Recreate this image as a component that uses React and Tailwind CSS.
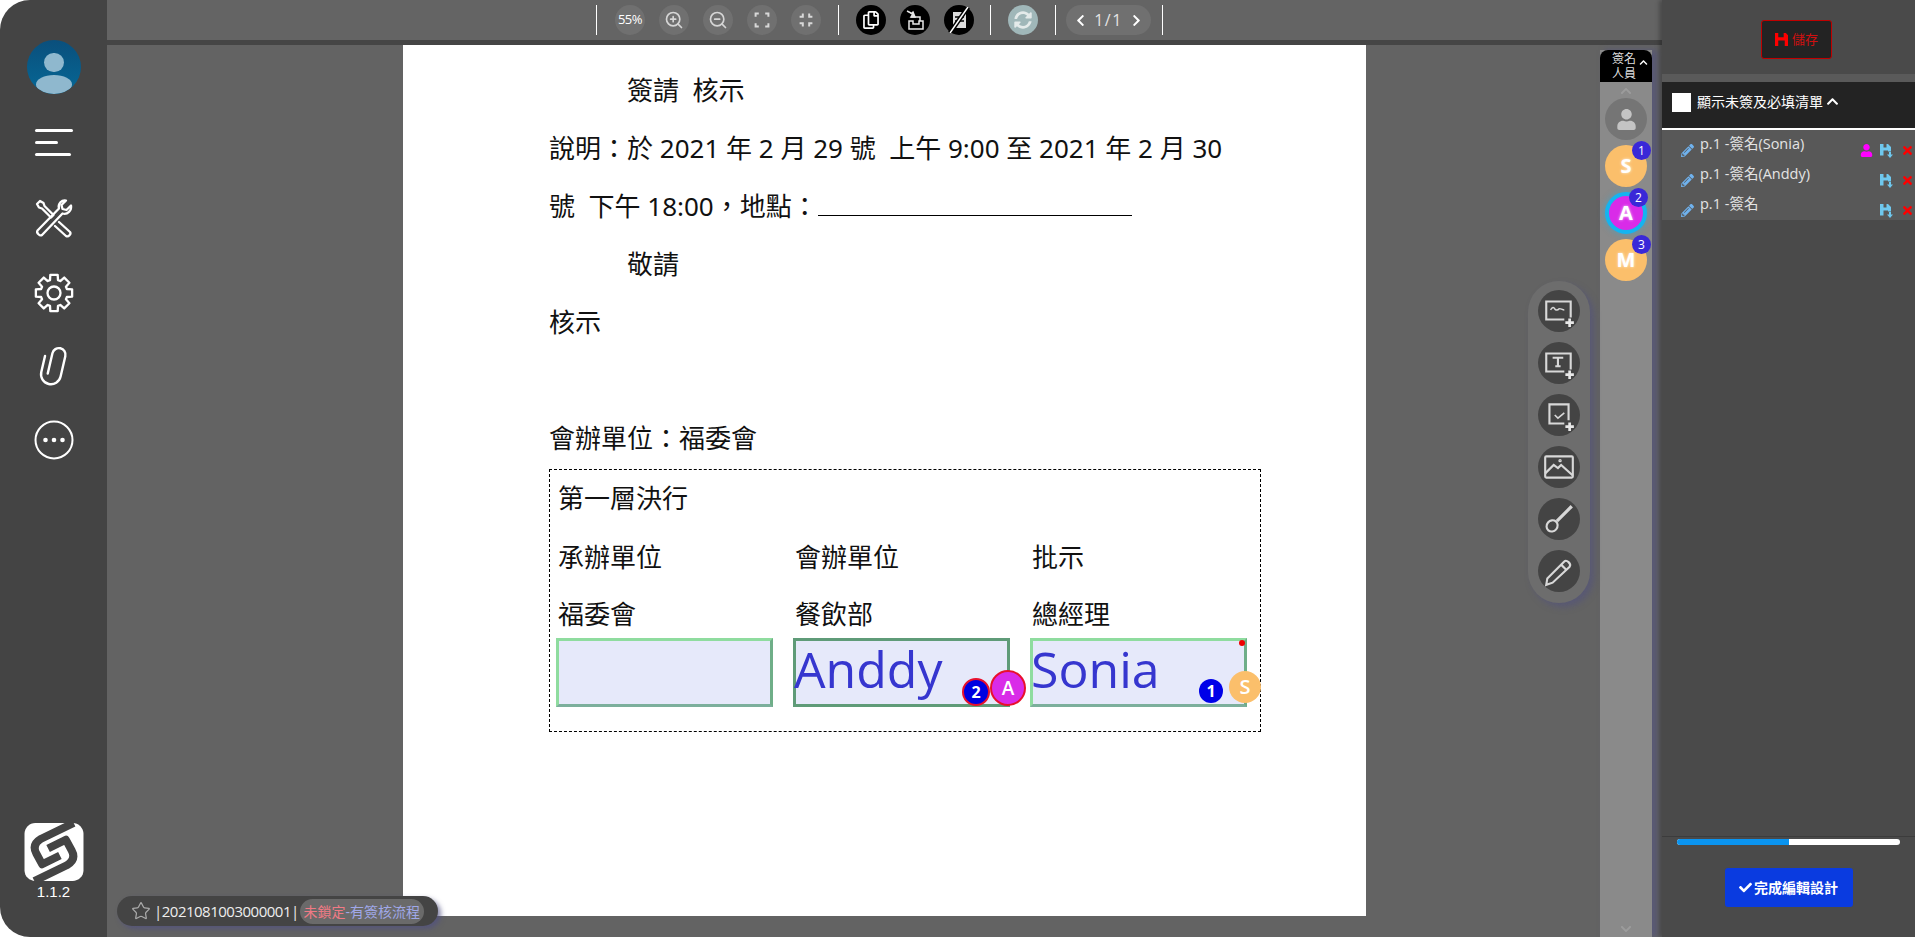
import React from "react";
import { ZoomIn, ZoomOut, Star } from "lucide-react";
import { FaCheck, FaChevronLeft, FaChevronRight, FaChevronUp, FaUser, FaTimes, FaPencilAlt, FaSyncAlt, FaRegCopy } from "react-icons/fa";

const font = { fontFamily: '"Open Sans","Noto Sans CJK TC",sans-serif' };

function Sep() { return <div className="w-px h-[30px] bg-white" />; }
function Round({ children, className = "" }) {
  return <div className={"w-[30px] h-[30px] rounded-full flex items-center justify-center " + className}>{children}</div>;
}
function Corners({ inward }) {
  const d = inward
    ? "M6 2v4H2M14 2v4h4M6 18v-4H2M14 18v-4h4"
    : "M2 6V2h4M14 2h4v4M2 14v4h4M18 14v4h-4";
  return <svg width="16" height="16" viewBox="0 0 20 20" fill="none" stroke="#d8d8d8" strokeWidth="2.500"><path d={d} /></svg>;
}

function Tools() {
  return (
    <svg width="40" height="40" viewBox="0 0 40 40" fill="none" stroke="#fff" strokeWidth="2.300" strokeLinejoin="round" strokeLinecap="round">
      <path d="M3 6l3-3 3.500 2 1 3 9 9-2.500 2.500-9-9-3-1z" />
      <path d="M32 2.500l-4.500 4.500 1 4 4 1 4.500-4.500c1 5-3.500 9.500-8.500 8L8 37c-2 1.500-6-2-4.500-4.500L25 10.500c-1.500-5 3-9 7-8z" />
      <path d="M25 24l11 10c1.500 2-1.500 5.500-4 4L21 28" />
    </svg>
  );
}

function gearPath() {
  const pts = [];
  const rO = 18.5, rI = 13.5, n = 8;
  for (let i = 0; i < n; i++) {
    const a = (i * 2 * Math.PI) / n;
    const w = 0.2, w2 = 0.3;
    const add = (r, t) => pts.push([20 + r * Math.sin(t), 20 - r * Math.cos(t)]);
    add(rI, a - w2);
    add(rO, a - w);
    add(rO, a + w);
    add(rI, a + w2);
  }
  return "M" + pts.map((p) => p[0].toFixed(2) + " " + p[1].toFixed(2)).join("L") + "Z";
}
function Gear() {
  return (
    <svg width="40" height="40" viewBox="0 0 40 40" fill="none" stroke="#fff" strokeWidth="2.300" strokeLinejoin="round">
      <path d={gearPath()} />
      <circle cx="20" cy="20" r="6.500" />
    </svg>
  );
}
function Clip() {
  return (
    <svg width="36" height="44" viewBox="0 0 32 40" fill="none" stroke="#fff" strokeWidth="2.200" strokeLinecap="round">
      <g transform="rotate(13 16 20)">
        <path d="M12 28V9a6 6 0 0 1 12 0V28a9 9 0 0 1-18 0V13" />
      </g>
    </svg>
  );
}
function Dots() {
  return (
    <svg width="40" height="40" viewBox="0 0 40 40">
      <circle cx="20" cy="20" r="18.500" fill="none" stroke="#fff" strokeWidth="2" />
      <circle cx="11.500" cy="20" r="2.300" fill="#fff" />
      <circle cx="20" cy="20" r="2.300" fill="#fff" />
      <circle cx="28.500" cy="20" r="2.300" fill="#fff" />
    </svg>
  );
}

function Logo() {
  return (
    <svg width="60" height="58" viewBox="0 0 60 59">
      <rect x="0" y="0" width="60" height="59" rx="11" fill="#fff" />
      <g fill="none" stroke="#444" strokeWidth="8" strokeLinejoin="round">
        <path d="M50 0L17 16Q7 22 12 31L18 42L36 33" />
        <path d="M10 59L43 43Q53 37 48 28L42 17L24 26" />
      </g>
    </svg>
  );
}

function Floppy({ color, size = 13 }) {
  return (
    <svg width={size} height={size} viewBox="0 0 12 12">
      <path fillRule="evenodd" d="M0 0H3V4H8V0H10L12 2V12H9V7H3V12H0Z" fill={color} />
    </svg>
  );
}
function FloppyDown() {
  return (
    <svg width="14" height="14" viewBox="0 0 14 14">
      <path d="M0 0H3.500V3.500H6.500V0H8L11 3V7.500H8V6.500H3.500V11.500H0Z" fill="#6fc8ee" />
      <path d="M9 8H11V10.500H13L10 14L7 10.500H9Z" fill="#6fc8ee" />
    </svg>
  );
}

function Sidebar() {
  return (
    <aside className="w-[107px] h-full shrink-0 bg-[#444444] rounded-tl-[30px] rounded-bl-[30px] flex flex-col items-center text-white">
      <div className="mt-[40px] w-[54px] h-[54px] rounded-full bg-gradient-to-b from-[#0a4f7c] to-[#056896] relative overflow-hidden flex flex-col items-center">
        <div className="mt-[13px] w-[20px] h-[20px] rounded-full bg-[#8fb8ce]" />
        <div className="mt-[3px] w-[36px] h-[19px] rounded-[50%] bg-[#8fb8ce]" />
      </div>
      <div className="mt-[35px] w-[38px] flex flex-col gap-[9px]">
        <div className="h-[3px] w-[38px] bg-white rounded" />
        <div className="h-[3px] w-[23px] bg-white rounded" />
        <div className="h-[3px] w-[36px] bg-white rounded" />
      </div>
      <div className="mt-[42px]"><Tools /></div>
      <div className="mt-[35px]"><Gear /></div>
      <div className="mt-[31px]"><Clip /></div>
      <div className="mt-[32px]"><Dots /></div>
      <div className="mt-auto"><Logo /></div>
      <div className="mt-[2px] mb-[36px] text-[15px] leading-[18px]" style={{ fontFamily: '"Liberation Sans",sans-serif' }}>1.1.2</div>
    </aside>
  );
}

function TopBar() {
  return (
    <div className="h-[40px] shrink-0 bg-[#646464] flex items-center pl-[489px] text-white relative">
      <Sep />
      <div className="ml-[18px] flex gap-[14px]">
        <Round className="bg-[#707070] text-[13px] tracking-[-0.5px]"><span>55%</span></Round>
        <Round className="bg-[#707070]"><ZoomIn size={20} color="#d5d5d5" /></Round>
        <Round className="bg-[#707070]"><ZoomOut size={20} color="#d5d5d5" /></Round>
        <Round className="bg-[#707070]"><Corners /></Round>
        <Round className="bg-[#707070]"><Corners inward /></Round>
      </div>
      <div className="ml-[17px]"><Sep /></div>
      <div className="ml-[17px] flex gap-[14px]">
        <Round className="bg-black"><FaRegCopy size={18} /></Round>
        <Round className="bg-black">
          <svg width="22" height="22" viewBox="0 0 22 22" fill="none" stroke="#e8e8e8" strokeWidth="1.500">
            <path d="M5 12V20H19V12H15V15H9V12Z" />
            <path d="M7 8H16V12" />
            <path d="M3 2L9 5L7 8L11 8L9 3L7 5" fill="#e8e8e8" stroke="#e8e8e8" />
          </svg>
        </Round>
        <Round className="bg-black relative">
          <svg width="24" height="26" viewBox="0 0 24 26"><rect x="6" y="5" width="13" height="16" fill="#ddd" /><path d="M8 10h9M8 14h9" stroke="#000" strokeWidth="1.500" /><path d="M3 26L21 0" stroke="#000" strokeWidth="4.500" /><path d="M3 26L21 0" stroke="#fff" strokeWidth="1.500" /></svg>
        </Round>
      </div>
      <div className="ml-[16px]"><Sep /></div>
      <div className="ml-[17px]">
        <Round className="bg-[#a0b7b9]"><FaSyncAlt size={18} color="#e4eaea" /></Round>
      </div>
      <div className="ml-[17px]"><Sep /></div>
      <div className="ml-[10px] w-[85px] h-[30px] rounded-full bg-[#707070] flex items-center justify-center gap-[7px]">
        <FaChevronLeft size={13} />
        <span className="text-[16px] tracking-[1.500px] text-[#e4e4e4]">1/1</span>
        <FaChevronRight size={13} />
      </div>
      <div className="ml-[11px]"><Sep /></div>
    </div>
  );
}

function Line({ children, indent }) {
  return <div className={"h-[58px] leading-[58px] whitespace-pre " + (indent ? "pl-[78px]" : "")}>{children}</div>;
}

function Field({ children, badges, dark }) {
  return (
    <div className={"relative w-[217px] h-[69px] bg-[#e6e9fa] border-[3px] " + (dark ? "border-[#5f9b78]" : "border-[#8fdc9f] border-r-[#6fae88] border-b-[#7caf9c]")}>
      <div className="ml-[-2px] mt-[-3px] text-[#3636cf] text-[50px] leading-[62px] whitespace-pre" style={{ fontFamily: '"Open Sans",sans-serif' }}>{children}</div>
      {badges}
    </div>
  );
}

function Document() {
  return (
    <div className="relative w-[963px] h-[871px] ml-[296px] shrink-0 bg-white pt-[16px] pl-[146px] text-[26px] text-[#111]" style={{ fontFamily: '"Noto Sans","Noto Sans CJK TC",sans-serif' }}>
      <Line indent>簽請  核示</Line>
      <Line>說明：於 2021 年 2 月 29 號  上午 9:00 至 2021 年 2 月 30</Line>
      <Line>號  下午 18:00，地點：<span className="inline-block w-[314px] border-b-[1.500px] border-black h-[26px] align-baseline" /></Line>
      <Line indent>敬請</Line>
      <Line>核示</Line>
      <Line> </Line>
      <Line>會辦單位：福委會</Line>
      <div className="mt-[2px] w-[712px] h-[263px] border border-dashed border-black pl-[6px]">
        <div className="pl-[2px] h-[56px] leading-[56px]">第一層決行</div>
        <div className="pl-[2px] mt-[2px] grid grid-cols-[237px_237px_200px] h-[58px] leading-[58px]"><span>承辦單位</span><span>會辦單位</span><span>批示</span></div>
        <div className="pl-[2px] grid grid-cols-[237px_237px_200px] h-[57px] leading-[57px]"><span>福委會</span><span>餐飲部</span><span>總經理</span></div>
        <div className="mt-[-5px] flex gap-[20px]" style={font}>
          <Field />
          <Field dark badges={
            <>
              <div className="absolute left-[166px] top-[37px] w-[28px] h-[28px] rounded-full bg-[#0000e0] border-2 border-[#e8102c] text-white text-[16px] font-bold flex items-center justify-center">2</div>
              <div className="absolute left-[194px] top-[29px] w-[36px] h-[36px] rounded-full bg-[#d92be8] border-2 border-[#e8102c] text-white text-[19px] font-semibold flex items-center justify-center">A</div>
            </>
          }>Anddy</Field>
          <Field badges={
            <>
              <div className="absolute right-[-1px] top-[-1px] w-[6px] h-[6px] rounded-full bg-[#f00000]" />
              <div className="absolute left-[166px] top-[38px] w-[24px] h-[24px] rounded-full bg-[#0000e8] text-white text-[16px] font-bold flex items-center justify-center">1</div>
              <div className="absolute left-[196px] top-[30px] w-[32px] h-[32px] rounded-full bg-[#fbbf6b] text-white text-[20px] font-semibold flex items-center justify-center">S</div>
            </>
          }>Sonia</Field>
        </div>
      </div>
    </div>
  );
}

function Avatar({ letter, n, active }) {
  return (
    <div className={"relative w-[42px] h-[42px] rounded-full flex items-center justify-center text-white text-[20px] font-bold [text-shadow:0_0_3px_rgba(255,255,255,0.8)] " + (active ? "bg-[#d92be8] border-[4px] border-[#14b4f0] shadow-[0_0_6px_rgba(20,180,240,0.5)]" : "bg-[#fbbf6b]")}>
      {letter}
      <div className={"absolute w-[19px] h-[19px] rounded-full bg-[#3a28d8] text-[12px] font-normal flex items-center justify-center [text-shadow:none] " + (active ? "top-[-8px] right-[-5px]" : "top-[-4px] right-[-4px]")}>{n}</div>
    </div>
  );
}

function SignerColumn() {
  return (
    <div className="absolute left-[1493px] top-[50px] bottom-0 w-[52px] bg-[#8a8a8a] shadow-[5px_0_6px_rgba(80,80,130,0.6)] flex flex-col items-center">
      <div className="w-full h-[32px] bg-black rounded-t-[8px] text-[12px] leading-[15px] text-[#ddd] pl-[12px] relative">
        <div className="pt-[1px]">簽名<br />人員</div>
        <FaChevronUp size={9} className="absolute right-[4px] top-[8px] text-white" />
      </div>
      <FaChevronUp size={12} className="mt-[3px] text-[#9c9c9c]" />
      <div className="mt-[1px] w-[42px] h-[42px] rounded-full bg-[#757575] flex items-center justify-center"><FaUser size={21} color="#c4c4c4" /></div>
      <div className="mt-[5px] flex flex-col gap-[5px]">
        <Avatar letter="S" n="1" />
        <Avatar letter="A" n="2" active />
        <Avatar letter="M" n="3" />
      </div>
      <FaChevronUp size={12} className="mt-auto mb-[2px] text-[#9c9c9c] rotate-180" />
    </div>
  );
}

function Plus() { return <path d="M26 23v8M22 27h8" stroke="#e8e8e8" strokeWidth="2.500" fill="none" />; }
function ToolBtn({ children }) {
  return <div className="w-[42px] h-[42px] rounded-full bg-[#444444] flex items-center justify-center">{children}</div>;
}
function FloatingTools() {
  const s = { width: 34, height: 34, viewBox: "0 0 32 32", fill: "none", stroke: "#d8d8d8", strokeWidth: 2 };
  return (
    <div className="absolute left-[1421px] top-[281px] w-[62px] h-[322px] rounded-full bg-[#6d6d6d] shadow-[4px_4px_6px_rgba(80,80,130,0.55)] flex flex-col items-center gap-[10px] pt-[9px]">
      <ToolBtn><svg {...s}><path d="M21 24H4V7h23v15" /><path d="M8 15c2-3 3-3 4-1s3 1 4 0 3 1 5 1" strokeWidth="1.400" /><Plus /></svg></ToolBtn>
      <ToolBtn><svg {...s}><path d="M21 24H4V7h23v15" /><path d="M10 11h10M15 11v8M12.500 19h5" /><Plus /></svg></ToolBtn>
      <ToolBtn><svg {...s}><path d="M21 24H7V6h18v15" /><path d="M12 16l3 3 6-5" strokeWidth="1.500" /><Plus /></svg></ToolBtn>
      <ToolBtn><svg {...s}><rect x="3" y="6" width="26" height="20" rx="1" /><path d="M3 22l8-8 4 3 3-3 11 10" /><circle cx="17" cy="10" r="0.600" /></svg></ToolBtn>
      <ToolBtn><svg {...s}><path d="M14 18L28 4" strokeWidth="3" /><ellipse cx="9.500" cy="22.500" rx="5" ry="5.500" transform="rotate(40 9.500 22.500)" /></svg></ToolBtn>
      <ToolBtn><svg {...s}><path d="M5 23L21 7c2-2 7 2 5 5L10 27l-6 2z" /><path d="M18 10l5 5" /></svg></ToolBtn>
    </div>
  );
}

function StatusPill() {
  return (
    <div className="absolute left-[10px] top-[896px] w-[321px] h-[30px] rounded-full bg-[#444444] shadow-[3px_3px_5px_rgba(80,80,130,0.7)] flex items-center pl-[14px] text-white" style={{ fontFamily: '"Open Sans","Noto Sans CJK TC",sans-serif' }}>
      <Star size={20} color="#aaa" strokeWidth={1.500} />
      <span className="ml-[3px] text-[15px] text-[#eee] tracking-[-0.5px] whitespace-pre">|2021081003000001|</span>
      <div className="ml-[1px] h-[25px] w-[124px] rounded-full bg-[#6a6a6a] flex items-center justify-center text-[14px] whitespace-pre">
        <span className="text-[#f07a85]">未鎖定</span><span className="text-[#a0a8e8]">-有簽核流程</span>
      </div>
    </div>
  );
}

function Row({ text, user }) {
  return (
    <div className="h-[30px] flex items-center pl-[19px] text-[#e4e4e4] text-[14.500px] relative whitespace-pre">
      <FaPencilAlt size={13} color="#6fb2ee" className="mt-[10px]" />
      <span className="ml-[6px] mb-[3px]">{text}</span>
      {user && <FaUser size={13} color="#ff00ff" className="absolute right-[42px] top-[14px]" />}
      <div className="absolute right-[21px] top-[14px]"><FloppyDown /></div>
      <FaTimes size={13} color="#ff0000" className="absolute right-[1px] top-[14px]" />
    </div>
  );
}

function RightPanel() {
  return (
    <aside className="w-[253px] ml-auto h-full shrink-0 bg-[#4a4a4a] flex flex-col overflow-hidden shadow-[-3px_0_4px_rgba(0,0,0,0.25)] z-10" style={font}>
      <div className="h-[74px] shrink-0 flex items-start pl-[99px] pt-[20px]">
        <div className="w-[71px] h-[39px] rounded-[3px] bg-[#232323] border border-[#c00000] flex items-center justify-center gap-[4px] text-[13px] text-[#d01010]">
          <Floppy color="#ff0000" size={13} /><span>儲存</span>
        </div>
      </div>
      <div className="h-[8px] shrink-0 bg-[#5a5a5a]" />
      <div className="h-[48px] shrink-0 bg-[#232323] border-b-2 border-white flex items-start pl-[10px] pt-[11px] text-white text-[14px]">
        <div className="w-[19px] h-[19px] bg-white" />
        <span className="ml-[6px] leading-[18px]">顯示未簽及必填清單</span>
        <FaChevronUp size={13} className="ml-[3px] mt-[2px]" />
      </div>
      <div className="h-[90px] shrink-0 bg-[#585858]">
        <Row text="p.1 -簽名(Sonia)" user />
        <Row text="p.1 -簽名(Anddy)" />
        <Row text="p.1 -簽名" />
      </div>
      <div className="mt-auto mx-0 border-t border-[#3c3c3c] pt-[2px] px-[15px]">
        <div className="h-[6px] bg-white rounded-full overflow-hidden"><div className="h-full w-1/2 bg-[#0a94f0]" /></div>
      </div>
      <div className="mt-[23px] mb-[30px] self-center w-[128px] h-[39px] bg-[#0a3be0] rounded-[3px] text-white text-[14px] font-semibold flex items-center justify-center gap-[2px]">
        <FaCheck size={13} /><span>完成編輯設計</span>
      </div>
    </aside>
  );
}

export default function App() {
  return (
    <div className="w-[1915px] h-[937px] flex bg-white overflow-hidden" style={font}>
      <Sidebar />
      <main className="relative w-[1555px] h-full bg-[#636363] flex flex-col shrink-0">
        <TopBar />
        <div className="h-[5px] shrink-0 bg-[#454545]" />
        <Document />
        <SignerColumn />
        <FloatingTools />
        <StatusPill />
      </main>
      <RightPanel />
    </div>
  );
}
